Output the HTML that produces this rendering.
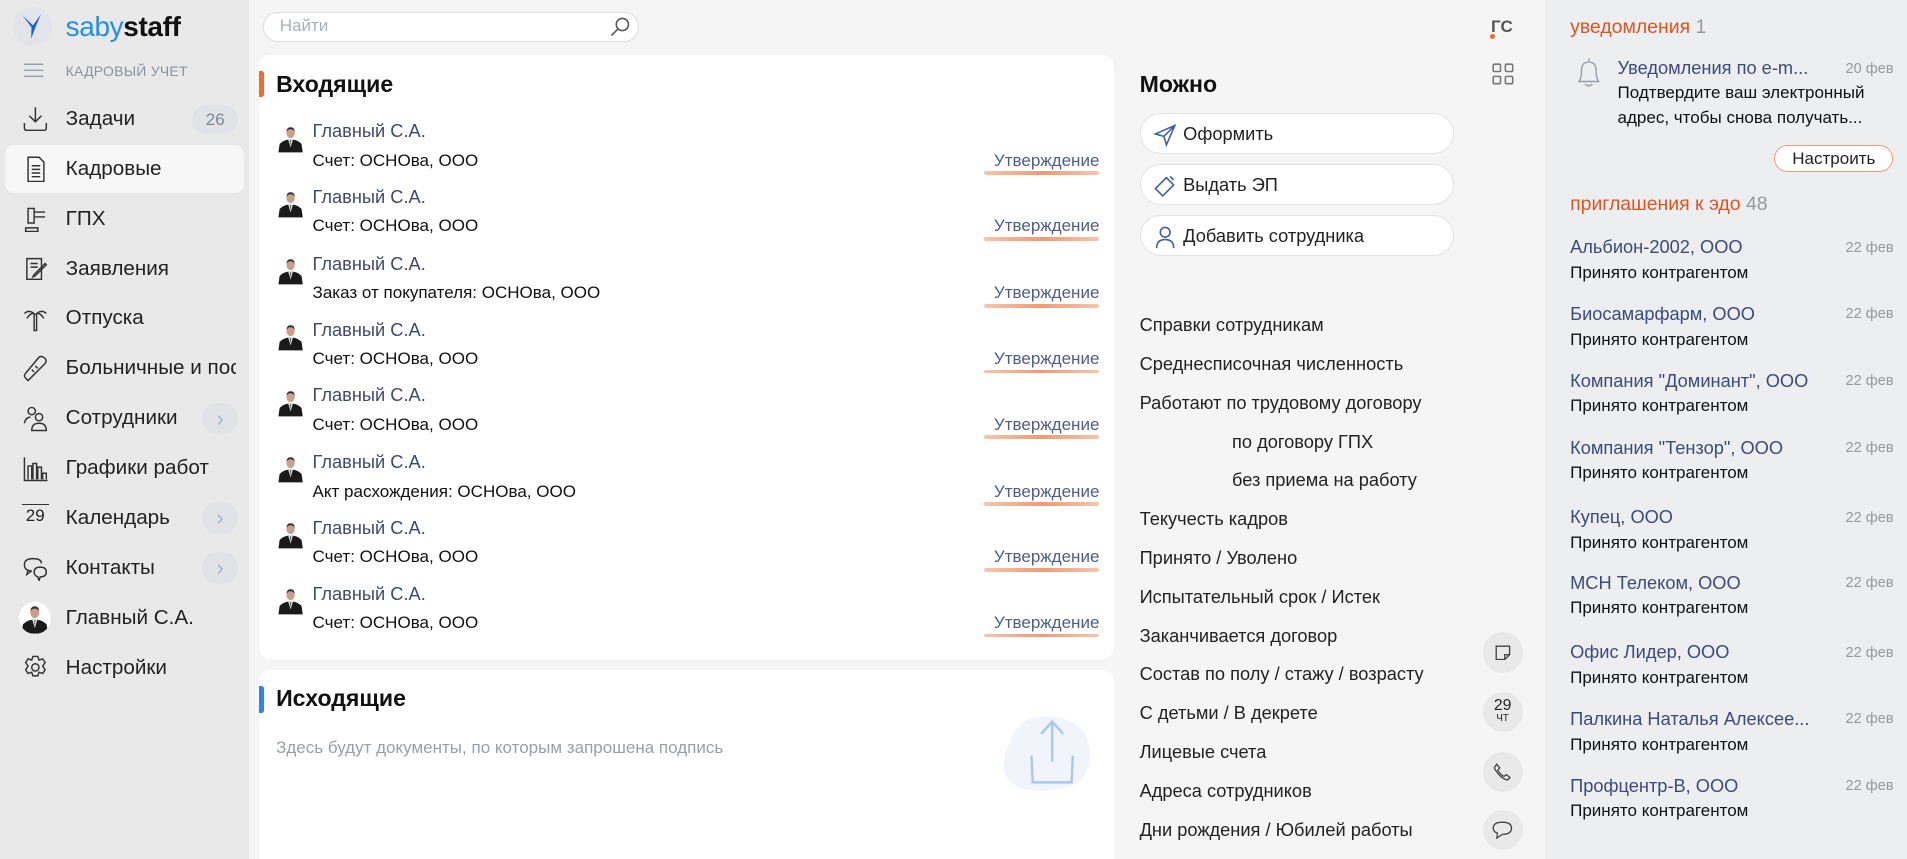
<!DOCTYPE html>
<html><head><meta charset="utf-8">
<style>
html,body{margin:0;padding:0;overflow:hidden;}
body{width:1907px;height:859px;background:#f5f5f5;font-family:"Liberation Sans",sans-serif;color:#222;}
#w{zoom:1.21620;width:1568px;height:706px;position:relative;overflow:hidden;}
.a{position:absolute;white-space:nowrap;}
#side{left:0;top:0;width:205px;height:706px;background:#e9e9e9;}
.mi{position:absolute;left:54px;font-size:17px;color:#222;line-height:20px;}
.ic{position:absolute;left:18px;width:22px;height:22px;}
.chev{position:absolute;left:166px;width:30px;height:26px;border-radius:13px;background:#e2e3e6;color:#9cb6d6;font-size:18px;text-align:center;line-height:26px;}
.card{position:absolute;background:#fff;border-radius:10px;}
.row .nm{position:absolute;left:44px;font-size:15px;color:#41476e;}
.row .dc{position:absolute;left:44px;font-size:14px;color:#111;}
.row .st{position:absolute;right:12px;font-size:14px;color:#4d5c8c;}
.row .ul{position:absolute;right:12px;width:95px;height:3px;border-radius:2px;background:linear-gradient(90deg,#f6c5ad,#f19a73,#f6c5ad);}
.btn{position:absolute;left:937px;width:257px;height:32px;border:1px solid #e3e3e3;border-radius:17px;background:#fff;}
.btn span{position:absolute;left:35px;top:7px;font-size:15px;color:#222;}
.btn svg{position:absolute;left:10px;top:7px;}
.li{position:absolute;left:937px;font-size:15px;color:#222;}
.cb{position:absolute;left:1219px;width:33px;height:33px;border-radius:50%;background:#e9e9e9;}
#rp{left:1270px;top:0;width:298px;height:706px;background:#eceef0;}
.rn{position:absolute;left:1291px;font-size:15px;color:#3e4a7c;}
.rs{position:absolute;left:1291px;font-size:14px;color:#111;}
.rd{position:absolute;right:11px;font-size:12px;color:#999;}
</style></head><body><div id="w">
<svg width="0" height="0" style="position:absolute">
<defs>
<symbol id="av" viewBox="0 0 24 24"><rect width="24" height="24" fill="#fff"/><path d="M2 24 L3 17 Q6 14 10 13.5 L14 13.5 Q18 14 21 17 L22 24Z" fill="#1a1a1a"/><path d="M10 13.5 L12 20 L14 13.5Z" fill="#ddd"/><path d="M11.5 14 L12 19 L12.5 14Z" fill="#555"/><ellipse cx="12" cy="8" rx="3.4" ry="4.3" fill="#c9a08c"/><path d="M8.6 7 Q9 3 12 3.3 Q15 3 15.4 7 Q14 5 12 5 Q10 5 8.6 7Z" fill="#333"/></symbol>
</defs></svg>

<div id="side" class="a">
  <div class="a" style="left:11px;top:6px;width:32px;height:32px;border-radius:50%;background:#e2e4ea;"></div>
  <svg class="a" style="left:16px;top:10px" width="22" height="24" viewBox="0 0 22 24"><path d="M3 3 L11.5 11 L18 2 L13.5 12.5 L10 22 L10.3 12.5 Z" fill="#1a5fd0"/></svg>
  <div class="a" style="left:54px;top:9px;font-size:23px;letter-spacing:-0.3px;"><span style="color:#1f8fe8">saby</span><span style="color:#111;font-weight:bold">staff</span></div>
  <svg class="a" style="left:20px;top:52px" width="16" height="12"><path d="M0 1h16M0 6h16M0 11h16" stroke="#9aa0aa" stroke-width="1.2"/></svg>
  <div class="a" style="left:54px;top:52px;font-size:11.5px;color:#8a93a0;letter-spacing:0.2px">КАДРОВЫЙ УЧЕТ</div>

  <svg class="ic" style="top:87px" viewBox="0 0 22 22" fill="none" stroke="#333" stroke-width="1.2"><path d="M11 1v12M6 8l5 5 5-5M2 14v4q0 2 2 2h14q2 0 2-2v-4"/></svg>
  <div class="mi" style="top:88px">Задачи</div>
  <div class="a" style="left:158px;top:86px;width:38px;height:24px;border-radius:12px;background:#e2e3e6;color:#7b879a;font-size:14px;text-align:center;line-height:24px">26</div>

  <div class="a" style="left:4px;top:119px;width:197px;height:40px;border-radius:8px;background:#f7f7f7"></div>
  <svg class="ic" style="top:128px" viewBox="0 0 22 22" fill="none" stroke="#333" stroke-width="1.2"><path d="M5 1h9l4 4v16H5z M8 8h7M8 11h7M8 14h7M8 17h7"/></svg>
  <div class="mi" style="top:129px">Кадровые</div>

  <svg class="ic" style="top:169px" viewBox="0 0 22 22" fill="none" stroke="#333" stroke-width="1.2"><path d="M5 2h5v12H5z M10 5h9M10 9h9 M3 18h10v3H3z"/></svg>
  <div class="mi" style="top:170px">ГПХ</div>
  <svg class="ic" style="top:210px" viewBox="0 0 22 22" fill="none" stroke="#333" stroke-width="1.2"><path d="M4 3h12v17H4z M7 7h6M7 10h6 M10 16l9-9 1 1-9 9-2 1z"/></svg>
  <div class="mi" style="top:211px">Заявления</div>
  <svg class="ic" style="top:251px" viewBox="0 0 22 22" fill="none" stroke="#333" stroke-width="1.2"><path d="M10 8v13h2V8 M11 8Q6 3 2 7 M11 8Q16 3 20 7 M11 8Q8 5 4 11 M11 8Q14 5 18 11"/></svg>
  <div class="mi" style="top:252px">Отпуска</div>
  <svg class="ic" style="top:292px" viewBox="0 0 22 22" fill="none" stroke="#333" stroke-width="1.2"><path d="M3 19l2 2 14-14q2-3-1-5t-5 1L3 15q-2 2 0 4z M8 12l2 2 M11 9l2 2"/></svg>
  <div class="mi" style="top:293px;width:140px;overflow:hidden">Больничные и пос</div>
  <svg class="ic" style="top:333px" viewBox="0 0 22 22" fill="none" stroke="#333" stroke-width="1.2"><circle cx="8" cy="5" r="3"/><circle cx="14" cy="10" r="3"/><path d="M2 15q1-5 5-5 M8 21q0-6 6-6t6 6z"/></svg>
  <div class="mi" style="top:334px">Сотрудники</div>
  <div class="chev" style="top:331px">›</div>
  <svg class="ic" style="top:374px" viewBox="0 0 22 22" fill="none" stroke="#333" stroke-width="1.2"><path d="M2 2v19h19 M5 20V9h3v11 M9 20V7h3v13 M13 20V10h3v10 M17 20v-5h3v5"/></svg>
  <div class="mi" style="top:375px">Графики работ</div>
  <div class="a" style="left:18px;top:414px;width:22px;border-top:1.2px solid #333;font-size:14px;text-align:center;color:#222;line-height:18px">29</div>
  <div class="mi" style="top:416px">Календарь</div>
  <div class="chev" style="top:413px">›</div>
  <svg class="ic" style="top:456px" viewBox="0 0 22 22" fill="none" stroke="#333" stroke-width="1.2"><path d="M8 13q-6 0-6-5t7-5 7 4 M5 12l-1 4 4-3 M10 14q0-4 5-4t5 4-5 4l-1 3-1-3q-3-1-3-4z"/></svg>
  <div class="mi" style="top:457px">Контакты</div>
  <div class="chev" style="top:454px">›</div>
  <svg class="a" style="left:16px;top:495px;border-radius:50%" width="26" height="26" viewBox="0 0 24 24"><use href="#av"/></svg>
  <div class="mi" style="top:498px">Главный С.А.</div>
  <svg class="ic" style="top:538px" viewBox="0 0 22 22" fill="none" stroke="#333" stroke-width="1.2"><circle cx="11" cy="11" r="3"/><path d="M9 2h4l1 3 3-1 2 3-2 3 2 3-2 3-3-1-1 3H9l-1-3-3 1-2-3 2-3-2-3 2-3 3 1z"/></svg>
  <div class="mi" style="top:539px">Настройки</div>
</div>

<div class="a" style="left:216px;top:10px;width:308px;height:23px;border:1px solid #ddd;border-radius:12px;background:#fff"></div>
<div class="a" style="left:230px;top:13px;font-size:14px;color:#aab0b8">Найти</div>
<svg class="a" style="left:501px;top:13px" width="18" height="18" viewBox="0 0 18 18" fill="none" stroke="#555" stroke-width="1.3"><circle cx="11" cy="7" r="5"/><path d="M7.5 10.5L2 16"/></svg>
<div class="a" style="left:1226px;top:14px;font-size:14px;color:#555;font-weight:bold">ГС</div>
<div class="a" style="left:1225px;top:28px;width:4px;height:4px;border-radius:50%;background:#f06a2a"></div>
<svg class="a" style="left:1227px;top:52px" width="18" height="18" viewBox="0 0 18 18" fill="none" stroke="#777" stroke-width="1.3"><rect x="1" y="1" width="6" height="6" rx="1"/><rect x="11" y="1" width="6" height="6" rx="1"/><rect x="1" y="11" width="6" height="6" rx="1"/><rect x="11" y="11" width="6" height="6" rx="1"/></svg>

<div class="card" style="left:213px;top:45px;width:703px;height:497px">
  <div class="a" style="left:0;top:13px;width:4px;height:22px;background:#f36a2a;border-radius:0 2px 2px 0"></div>
  <div class="a" style="left:14px;top:13px;font-size:19px;font-weight:bold;color:#111">Входящие</div>
  <div class="row">
   <svg class="a" style="left:14px;top:55px" width="24" height="26"><use href="#av"/></svg><div class="nm" style="top:54px">Главный С.А.</div><div class="dc" style="top:79px">Счет: ОСНОва, ООО</div><div class="st" style="top:79px">Утверждение</div><div class="ul" style="top:96px"></div>
  </div>
  <div class="row">
   <svg class="a" style="left:14px;top:109px" width="24" height="26"><use href="#av"/></svg><div class="nm" style="top:108px">Главный С.А.</div><div class="dc" style="top:133px">Счет: ОСНОва, ООО</div><div class="st" style="top:133px">Утверждение</div><div class="ul" style="top:150px"></div>
  </div>
  <div class="row">
   <svg class="a" style="left:14px;top:164px" width="24" height="26"><use href="#av"/></svg><div class="nm" style="top:163px">Главный С.А.</div><div class="dc" style="top:188px">Заказ от покупателя: ОСНОва, ООО</div><div class="st" style="top:188px">Утверждение</div><div class="ul" style="top:205px"></div>
  </div>
  <div class="row">
   <svg class="a" style="left:14px;top:218px" width="24" height="26"><use href="#av"/></svg><div class="nm" style="top:217px">Главный С.А.</div><div class="dc" style="top:242px">Счет: ОСНОва, ООО</div><div class="st" style="top:242px">Утверждение</div><div class="ul" style="top:259px"></div>
  </div>
  <div class="row">
   <svg class="a" style="left:14px;top:272px" width="24" height="26"><use href="#av"/></svg><div class="nm" style="top:271px">Главный С.А.</div><div class="dc" style="top:296px">Счет: ОСНОва, ООО</div><div class="st" style="top:296px">Утверждение</div><div class="ul" style="top:313px"></div>
  </div>
  <div class="row">
   <svg class="a" style="left:14px;top:327px" width="24" height="26"><use href="#av"/></svg><div class="nm" style="top:326px">Главный С.А.</div><div class="dc" style="top:351px">Акт расхождения: ОСНОва, ООО</div><div class="st" style="top:351px">Утверждение</div><div class="ul" style="top:368px"></div>
  </div>
  <div class="row">
   <svg class="a" style="left:14px;top:381px" width="24" height="26"><use href="#av"/></svg><div class="nm" style="top:380px">Главный С.А.</div><div class="dc" style="top:405px">Счет: ОСНОва, ООО</div><div class="st" style="top:405px">Утверждение</div><div class="ul" style="top:422px"></div>
  </div>
  <div class="row">
   <svg class="a" style="left:14px;top:435px" width="24" height="26"><use href="#av"/></svg><div class="nm" style="top:434px">Главный С.А.</div><div class="dc" style="top:459px">Счет: ОСНОва, ООО</div><div class="st" style="top:459px">Утверждение</div><div class="ul" style="top:476px"></div>
  </div>
</div>

<div class="card" style="left:213px;top:551px;width:703px;height:170px">
  <div class="a" style="left:0;top:13px;width:4px;height:22px;background:#2a86e8;border-radius:0 2px 2px 0"></div>
  <div class="a" style="left:14px;top:12px;font-size:19px;font-weight:bold;color:#111">Исходящие</div>
  <div class="a" style="left:14px;top:56px;font-size:14px;color:#9a9ea6">Здесь будут документы, по которым запрошена подпись</div>
  <svg class="a" style="left:605px;top:30px" width="90" height="75" viewBox="0 0 90 75"><path d="M12 30 Q20 5 45 8 Q75 10 78 35 Q80 65 50 68 Q15 72 8 55 Q5 42 12 30Z" fill="#f1f5fb"/><path d="M47 12 V45 M38 22 L47 12 L56 22 M30 40 L31 62 H63 L64 40" fill="none" stroke="#a9c9ef" stroke-width="2"/></svg>
</div>

<div class="a" style="left:937px;top:58px;font-size:19px;font-weight:bold;color:#111">Можно</div>
<div class="btn" style="top:93px"><svg width="20" height="20" viewBox="0 0 20 20" fill="none" stroke="#3f5ea8" stroke-width="1.3"><path d="M2 9 L18 2 L11 18 L9 11 Z M9 11 L18 2"/></svg><span>Оформить</span></div>
<div class="btn" style="top:135px"><svg width="20" height="20" viewBox="0 0 20 20" fill="none" stroke="#3f5ea8" stroke-width="1.3"><path d="M2 12 L11 3 L17 9 L8 18 Z M14 2 l3 3"/></svg><span>Выдать ЭП</span></div>
<div class="btn" style="top:177px"><svg width="20" height="20" viewBox="0 0 20 20" fill="none" stroke="#3f5ea8" stroke-width="1.3"><circle cx="10" cy="6" r="4"/><path d="M3 19 Q3 12 10 12 Q17 12 17 19"/></svg><span>Добавить сотрудника</span></div>

<div class="li" style="top:258px">Справки сотрудникам</div>
<div class="li" style="top:290px">Среднесписочная численность</div>
<div class="li" style="top:322px">Работают по трудовому договору</div>
<div class="li" style="top:354px;left:1013px">по договору ГПХ</div>
<div class="li" style="top:386px;left:1013px">без приема на работу</div>
<div class="li" style="top:418px">Текучесть кадров</div>
<div class="li" style="top:450px">Принято / Уволено</div>
<div class="li" style="top:482px">Испытательный срок / Истек</div>
<div class="li" style="top:514px">Заканчивается договор</div>
<div class="li" style="top:545px">Состав по полу / стажу / возрасту</div>
<div class="li" style="top:577px">С детьми / В декрете</div>
<div class="li" style="top:609px">Лицевые счета</div>
<div class="li" style="top:641px">Адреса сотрудников</div>
<div class="li" style="top:673px">Дни рождения / Юбилей работы</div>

<div class="cb" style="top:520px"><svg style="position:absolute;left:10px;top:10px" width="13" height="13" viewBox="0 0 13 13" fill="none" stroke="#444" stroke-width="1.1"><path d="M1 1h11v7l-4 4H1z M8 12V8h4"/></svg></div>
<div class="cb" style="top:569px;text-align:center;font-size:13px;line-height:12px;color:#222"><div style="margin-top:6px">29</div><div style="font-size:8px;line-height:8px">ЧТ</div></div>
<div class="cb" style="top:618px"><svg style="position:absolute;left:9px;top:9px" width="15" height="15" viewBox="0 0 15 15" fill="none" stroke="#444" stroke-width="1.1"><path d="M3 1 L5.5 4 L4 6 Q6 9.5 9 11 L11 9.5 L14 12 L12 14 Q6 13 1 4 Z"/></svg></div>
<div class="cb" style="top:666px"><svg style="position:absolute;left:8px;top:9px" width="17" height="15" viewBox="0 0 17 15" fill="none" stroke="#444" stroke-width="1.1"><path d="M8.5 1 Q16 1 16 6 Q16 11 8.5 11 L4 14 L4.5 10 Q1 9 1 6 Q1 1 8.5 1Z"/></svg></div>

<div id="rp" class="a"></div>
<div class="a" style="left:1291px;top:13px;font-size:16px;color:#e2531f">уведомления <span style="color:#999">1</span></div>
<svg class="a" style="left:1293px;top:46px" width="26" height="28" viewBox="0 0 26 28" fill="none" stroke="#9aa0a8" stroke-width="1.2"><path d="M13 2 V4 M5 21 Q7 18 7 12 Q7 5 13 5 Q19 5 19 12 Q19 18 21 21 Z M10 23 Q13 26 16 23"/></svg>
<div class="a" style="left:1330px;top:47px;font-size:15px;color:#3e4a7c">Уведомления по e-m...</div>
<div class="a" style="right:11px;top:50px;font-size:12px;color:#999">20 фев</div>
<div class="a" style="left:1330px;top:68px;font-size:14px;color:#111">Подтвердите ваш электронный</div>
<div class="a" style="left:1330px;top:89px;font-size:14px;color:#111">адрес, чтобы снова получать...</div>
<div class="a" style="left:1459px;top:119px;width:96px;height:21px;border:1px solid #f19a73;border-radius:12px;background:#fff;font-size:14px;text-align:center;line-height:21px;color:#222">Настроить</div>
<div class="a" style="left:1291px;top:159px;font-size:16px;color:#e2531f">приглашения к эдо <span style="color:#999">48</span></div>

<div class="rn" style="top:194px">Альбион-2002, ООО</div><div class="rd a" style="top:197px">22 фев</div><div class="rs" style="top:216px">Принято контрагентом</div>
<div class="rn" style="top:249px">Биосамарфарм, ООО</div><div class="rd a" style="top:252px">22 фев</div><div class="rs" style="top:271px">Принято контрагентом</div>
<div class="rn" style="top:304px">Компания "Доминант", ООО</div><div class="rd a" style="top:307px">22 фев</div><div class="rs" style="top:326px">Принято контрагентом</div>
<div class="rn" style="top:359px">Компания "Тензор", ООО</div><div class="rd a" style="top:362px">22 фев</div><div class="rs" style="top:381px">Принято контрагентом</div>
<div class="rn" style="top:416px">Купец, ООО</div><div class="rd a" style="top:419px">22 фев</div><div class="rs" style="top:438px">Принято контрагентом</div>
<div class="rn" style="top:470px">МСН Телеком, ООО</div><div class="rd a" style="top:473px">22 фев</div><div class="rs" style="top:492px">Принято контрагентом</div>
<div class="rn" style="top:527px">Офис Лидер, ООО</div><div class="rd a" style="top:530px">22 фев</div><div class="rs" style="top:549px">Принято контрагентом</div>
<div class="rn" style="top:582px">Палкина Наталья Алексее...</div><div class="rd a" style="top:585px">22 фев</div><div class="rs" style="top:604px">Принято контрагентом</div>
<div class="rn" style="top:637px">Профцентр-В, ООО</div><div class="rd a" style="top:640px">22 фев</div><div class="rs" style="top:659px">Принято контрагентом</div>
</div></body></html>
